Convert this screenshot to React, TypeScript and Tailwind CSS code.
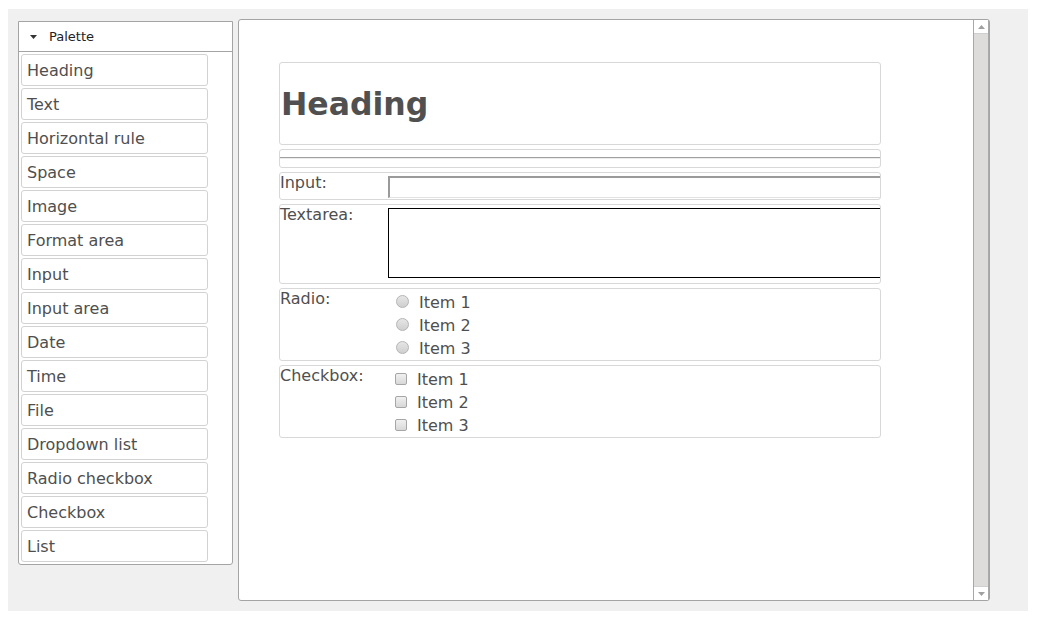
import React from "react"

const paletteItems = [
  "Heading",
  "Text",
  "Horizontal rule",
  "Space",
  "Image",
  "Format area",
  "Input",
  "Input area",
  "Date",
  "Time",
  "File",
  "Dropdown list",
  "Radio checkbox",
  "Checkbox",
  "List",
]

const options = ["Item 1", "Item 2", "Item 3"]

function Radio() {
  return (
    <span className="block w-[13px] h-[13px] rounded-full border border-[#b4b4b4] bg-gradient-to-b from-[#e6e6e6] to-[#cfcfcf]" />
  )
}

function Check() {
  return (
    <span className="block w-[12px] h-[12px] rounded-[2px] border border-[#a6a6a6] bg-gradient-to-b from-[#f0f0f0] to-[#d8d8d8]" />
  )
}

export default function App() {
  return (
    <div
      className="bg-white w-[1037px] h-[619px] pt-[9px] pl-[8px] text-[#4f4f4f]"
      style={{ fontFamily: '"DejaVu Sans", Verdana, sans-serif' }}
    >
      <div className="flex items-start bg-[#f0f0f0] w-[1020px] h-[602px] pl-[10px]">
        {/* Palette */}
        <div className="mt-[12px] w-[215px] h-[544px] bg-white border border-[#a4a4a4] rounded-b-[3px]">
          <div className="flex items-center h-[30px] border-b border-[#a4a4a4] pl-[11px] pt-[1px] text-[13px] text-[#222]">
            <svg width="7" height="4" viewBox="0 0 7 4" className="mr-[12px]">
              <path d="M0 0 L7 0 L3.5 4 Z" fill="#333" />
            </svg>
            Palette
          </div>
          <div className="flex flex-col gap-[2px] pt-[2px] pl-[2px]">
            {paletteItems.map((item) => (
              <div
                key={item}
                className="flex items-center w-[187px] h-[32px] pl-[5px] pt-[2px] border border-[#d2d2d2] rounded-[3px] text-[16px]"
              >
                {item}
              </div>
            ))}
          </div>
        </div>

        {/* Main canvas */}
        <div className="flex mt-[10px] ml-[5px] w-[752px] h-[582px] bg-white border border-[#a4a4a4] rounded-[3px]">
          <div className="flex-1 pl-[40px] pt-[42px]">
            <div className="flex flex-col gap-[4px] w-[602px] text-[16px]">
              <div className="flex items-center h-[83px] border border-[#d8d8d8] rounded-[3px] pt-[2px] pl-[1px]">
                <h1 className="font-bold text-[31.5px] text-[#505050]">Heading</h1>
              </div>

              <div className="flex flex-col h-[19px] border border-[#d8d8d8] rounded-[3px] pt-[7px]">
                <div className="h-[1px] bg-[#a0a0a0]" />
                <div className="h-[1px] bg-[#ececec]" />
              </div>

              <div className="flex h-[28px] border border-[#d8d8d8] rounded-[3px] leading-[20px]">
                <div className="w-[108px]">Input:</div>
                <div className="flex-1 mt-[3px] h-[22px] border-t-2 border-l-2 border-[#9a9a9a] border-b border-b-[#e2e2e2] bg-white" />
              </div>

              <div className="flex h-[80px] border border-[#d8d8d8] rounded-[3px] leading-[20px]">
                <div className="w-[108px]">Textarea:</div>
                <div className="flex-1 mt-[3px] h-[70px] border border-r-0 border-black bg-white" />
              </div>

              <div className="flex h-[73px] border border-[#d8d8d8] rounded-[3px] leading-[20px]">
                <div className="w-[108px]">Radio:</div>
                <div className="flex flex-col pt-[1px]">
                  {options.map((o) => (
                    <div key={o} className="flex items-center h-[23px] pl-[8px] gap-[10px]">
                      <Radio />
                      <span className="pt-[2px]">{o}</span>
                    </div>
                  ))}
                </div>
              </div>

              <div className="flex h-[73px] border border-[#d8d8d8] rounded-[3px] leading-[20px]">
                <div className="w-[108px]">Checkbox:</div>
                <div className="flex flex-col pt-[1px]">
                  {options.map((o) => (
                    <div key={o} className="flex items-center h-[23px] pl-[7px] gap-[10px]">
                      <Check />
                      <span className="pt-[2px]">{o}</span>
                    </div>
                  ))}
                </div>
              </div>
            </div>
          </div>

          {/* Scrollbar */}
          <div className="flex flex-col w-[16px] h-full border-l border-r border-[#a8a8a8] bg-[#dddcdb]">
            <div className="flex items-center justify-center h-[14px] bg-white border-b border-[#cfcfcf]">
              <svg width="7" height="4" viewBox="0 0 7 4">
                <path d="M3.5 0 L7 4 L0 4 Z" fill="#a0a0a0" />
              </svg>
            </div>
            <div className="flex-1" />
            <div className="flex items-center justify-center h-[14px] bg-white border-t border-[#cfcfcf]">
              <svg width="7" height="4" viewBox="0 0 7 4">
                <path d="M0 0 L7 0 L3.5 4 Z" fill="#a0a0a0" />
              </svg>
            </div>
          </div>
        </div>
      </div>
    </div>
  )
}
